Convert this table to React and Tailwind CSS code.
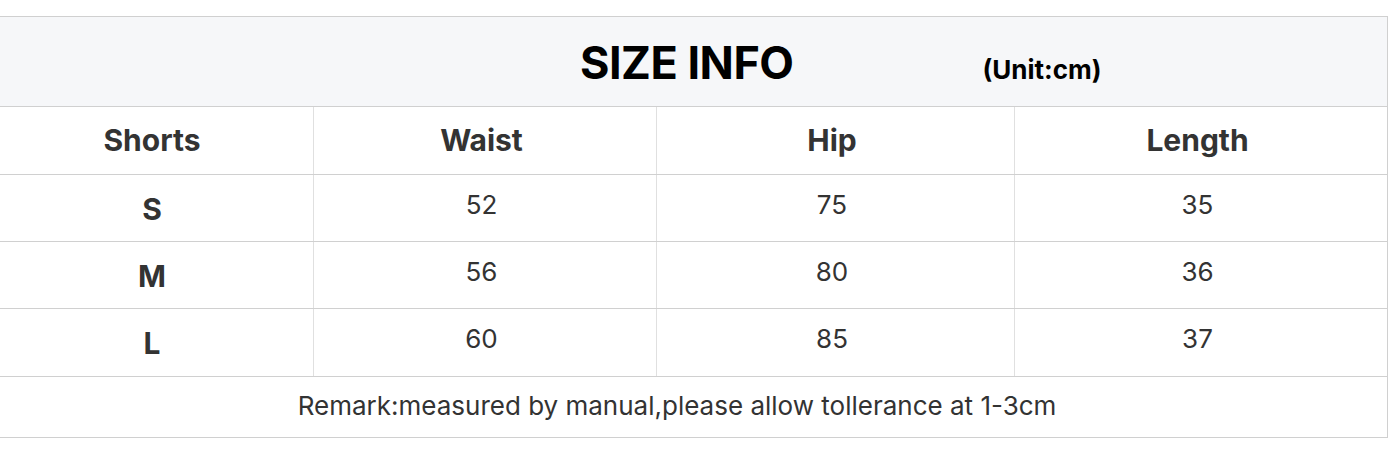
export default function App() {
  const rows = [
    ["S", "52", "75", "35"],
    ["M", "56", "80", "36"],
    ["L", "60", "85", "37"],
  ];
  const cols = "grid grid-cols-[314px_343px_358px_372px]";
  return (
    <div className="w-[1398px] h-[451px] bg-white pt-[16px]" style={{ fontFamily: "Inter, 'Liberation Sans', sans-serif" }}>
      <div className="w-[1388px] border-t border-r border-[#d0d0d0]">
        <div className="h-[90px] bg-[#f6f7f9] border-b border-[#d0d0d0] flex items-baseline pl-[580px] pt-[23px]">
          <span className="text-[45px] font-bold text-black leading-[45px] tracking-[-0.5px]">SIZE INFO</span>
          <span className="ml-[189px] text-[26px] font-bold text-black leading-[30px]">(Unit:cm)</span>
        </div>
        <div className={`${cols} h-[68px] border-b border-[#d0d0d0]`}>
          {["Shorts", "Waist", "Hip", "Length"].map((h, i) => (
            <div key={h} className={`flex items-center justify-center ${i === 0 ? "pr-[9px]" : "pr-[7px]"} text-[30px] font-bold text-[#333] ${i < 3 ? "border-r border-[#e0e0e0]" : ""}`}>
              {h}
            </div>
          ))}
        </div>
        {rows.map((r, ri) => (
          <div key={ri} className={`${cols} ${ri === 2 ? "h-[68px]" : "h-[67px]"} border-b border-[#d0d0d0]`}>
            {r.map((c, i) => (
              <div
                key={i}
                className={`flex items-center justify-center ${i === 0 ? "pr-[9px] text-[30px] font-bold pt-[2px]" : "pr-[7px] text-[26px] font-normal pb-[8px]"} text-[#333] ${i < 3 ? "border-r border-[#e0e0e0]" : ""}`}
              >
                {c}
              </div>
            ))}
          </div>
        ))}
        <div className="h-[61px] border-b border-[#d0d0d0] flex items-center justify-center pr-[33px] pb-[3px] text-[26px] text-[#333]">
          Remark:measured by manual,please allow tollerance at 1-3cm
        </div>
      </div>
    </div>
  );
}
